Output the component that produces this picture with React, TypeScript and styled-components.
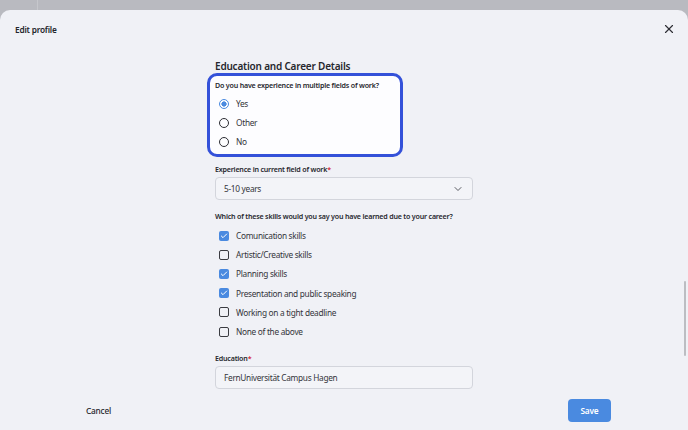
import { createGlobalStyle } from 'styled-components';
import styled from 'styled-components';
import { X, ChevronDown, Check } from 'lucide-react';

const GlobalStyle = createGlobalStyle`
  html, body {
    margin: 0;
    padding: 0;
    background: #b9bac0;
    font-family: "Noto Sans", "Open Sans", sans-serif;
    color: #26272d;
  }
  * { box-sizing: border-box; }
`;

const RADIOS = [
  { label: 'Yes', checked: true },
  { label: 'Other', checked: false },
  { label: 'No', checked: false },
];

const SKILLS = [
  { label: 'Comunication skills', checked: true },
  { label: 'Artistic/Creative skills', checked: false },
  { label: 'Planning skills', checked: true },
  { label: 'Presentation and public speaking', checked: true },
  { label: 'Working on a tight deadline', checked: false },
  { label: 'None of the above', checked: false },
];

export default function App() {
  return (
    <>
      <GlobalStyle />
      <Page>
        <Backdrop />
        <Modal>
          <Header>
            <Title>Edit profile</Title>
            <CloseButton aria-label="Close">
              <X size={14} strokeWidth={2} />
            </CloseButton>
          </Header>

          <Body>
            <Column>
              <SectionTitle>Education and Career Details</SectionTitle>

              <Highlight>
                <Question>Do you have experience in multiple fields of work?</Question>
                {RADIOS.map((r) => (
                  <OptionRow key={r.label} $h={19}>
                    <Radio $checked={r.checked} />
                    <OptionLabel>{r.label}</OptionLabel>
                  </OptionRow>
                ))}
              </Highlight>

              <Label $gap={5}>
                Experience in current field of work<Req>*</Req>
              </Label>
              <Field>
                <span>5-10 years</span>
                <ChevronDown size={12} strokeWidth={1.8} color="#4a4b52" />
              </Field>

              <Label $gap={9}>Which of these skills would you say you have learned due to your career?</Label>
              <Checklist>
                {SKILLS.map((s) => (
                  <OptionRow key={s.label} $h={19.2}>
                    <Box $checked={s.checked}>
                      {s.checked ? <Check size={8} strokeWidth={3} color="#fff" /> : null}
                    </Box>
                    <OptionLabel>{s.label}</OptionLabel>
                  </OptionRow>
                ))}
              </Checklist>

              <Label $gap={10}>
                Education<Req>*</Req>
              </Label>
              <Field>
                <span>FernUniversität Campus Hagen</span>
              </Field>
            </Column>
            <ScrollThumb />
          </Body>

          <Footer>
            <CancelButton>Cancel</CancelButton>
            <SaveButton>Save</SaveButton>
          </Footer>
        </Modal>
      </Page>
    </>
  );
}

const Page = styled.div`
  width: 688px;
  height: 430px;
  display: flex;
  flex-direction: column;
  overflow: hidden;
`;

const Backdrop = styled.div`
  height: 10px;
  flex: none;
  background:
    linear-gradient(90deg, transparent 37px, #c6c7cc 37px, #c6c7cc 38px, transparent 38px),
    #b9bac0;
`;

const Modal = styled.div`
  flex: 1;
  display: flex;
  flex-direction: column;
  background: #f0f1f6;
  border-radius: 10px 10px 0 0;
  min-height: 0;
`;

const Header = styled.div`
  height: 38px;
  flex: none;
  display: flex;
  align-items: center;
  justify-content: space-between;
  padding: 0 11px 0 15px;
`;

const Title = styled.h1`
  margin: 0;
  font-size: 8.3px;
  letter-spacing: -0.2px;
  font-weight: 600;
  color: #24252b;
`;

const CloseButton = styled.button`
  display: flex;
  align-items: center;
  justify-content: center;
  width: 16px;
  height: 16px;
  padding: 0;
  border: 0;
  background: none;
  color: #2e2f35;
`;

const Body = styled.div`
  position: relative;
  flex: 1;
  min-height: 0;
  overflow: hidden;
  padding-top: 11px;
`;

const Column = styled.div`
  width: 258px;
  margin: 0 auto;
  display: flex;
  flex-direction: column;
`;

const SectionTitle = styled.h2`
  margin: 0 0 -1px;
  font-size: 10px;
  letter-spacing: -0.2px;
  line-height: 15px;
  font-weight: 600;
  color: #26272d;
`;

const Highlight = styled.div`
  width: 196px;
  margin-left: -8px;
  padding: 2px 5px 3px;
  border: 3px solid #3451d9;
  border-radius: 10px;
  background: #fdfdff;
`;

const Question = styled.p`
  margin: 0 0 2px;
  font-size: 7.1px;
  letter-spacing: -0.2px;
  line-height: 14px;
  font-weight: 600;
  color: #26272d;
`;

const OptionRow = styled.div<{ $h: number }>`
  height: ${({ $h }) => $h}px;
  display: flex;
  align-items: center;
  gap: 7px;
  padding-left: 4px;
`;

const OptionLabel = styled.span`
  font-size: 8.3px;
  letter-spacing: -0.3px;
  color: #34353b;
`;

const Radio = styled.span<{ $checked: boolean }>`
  width: 10px;
  height: 10px;
  flex: none;
  border-radius: 50%;
  border: 1.4px solid ${({ $checked }) => ($checked ? '#4a8ae0' : '#2c2d33')};
  background: ${({ $checked }) =>
    $checked ? 'radial-gradient(circle, #4a8ae0 0 2.4px, #fff 2.8px)' : 'transparent'};
`;

const Box = styled.span<{ $checked: boolean }>`
  width: 10px;
  height: 10px;
  flex: none;
  display: flex;
  align-items: center;
  justify-content: center;
  border-radius: 2px;
  border: ${({ $checked }) => ($checked ? 'none' : '1.4px solid #3a3b41')};
  background: ${({ $checked }) => ($checked ? '#4a8ae0' : 'transparent')};
`;

const Label = styled.p<{ $gap: number }>`
  margin: ${({ $gap }) => $gap}px 0 1px;
  font-size: 7.1px;
  letter-spacing: -0.2px;
  line-height: 14px;
  font-weight: 600;
  color: #26272d;
`;

const Req = styled.span`
  color: #d42a3a;
`;

const Field = styled.div`
  height: 23px;
  display: flex;
  align-items: center;
  justify-content: space-between;
  padding: 0 8px 0 8px;
  border: 1px solid #d3d5dc;
  border-radius: 4px;
  background: #f3f4f8;
  font-size: 8.3px;
  letter-spacing: -0.3px;
  color: #34353b;
`;

const Checklist = styled.div`
  display: flex;
  flex-direction: column;
  margin-top: 2px;
`;

const ScrollThumb = styled.div`
  position: absolute;
  right: 2px;
  top: 233px;
  width: 2px;
  height: 75px;
  border-radius: 1px;
  background: #bcbdc2;
`;

const Footer = styled.div`
  height: 40px;
  flex: none;
  display: flex;
  align-items: center;
  justify-content: space-between;
  padding: 0 77px 0 74px;
`;

const CancelButton = styled.button`
  padding: 0 12px;
  border: 0;
  background: none;
  font-family: inherit;
  font-size: 8.3px;
  letter-spacing: -0.2px;
  font-weight: 500;
  color: #26272d;
`;

const SaveButton = styled.button`
  width: 43px;
  height: 23px;
  border: 0;
  border-radius: 4px;
  background: #4a8ae0;
  color: #fff;
  font-family: inherit;
  font-size: 8.3px;
  letter-spacing: -0.2px;
  font-weight: 600;
`;
